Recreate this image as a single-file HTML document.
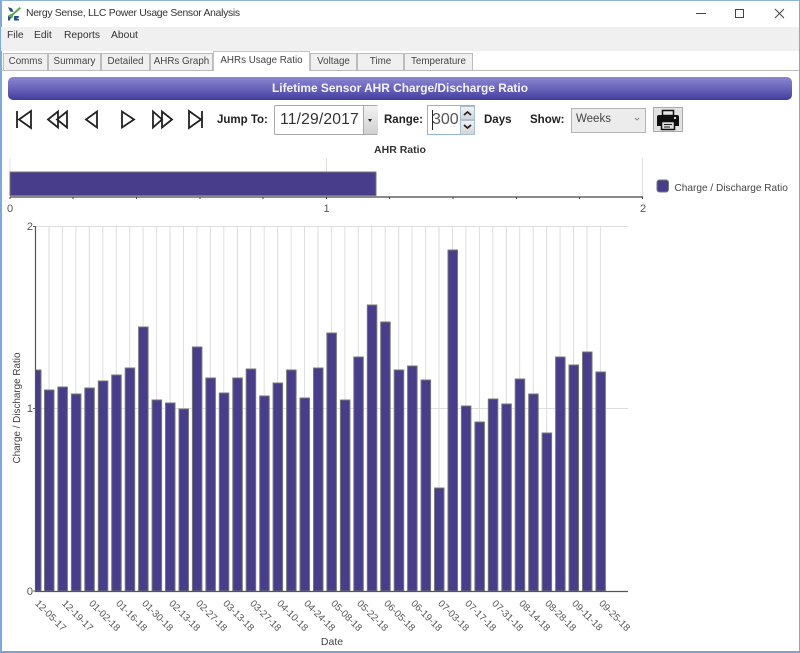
<!DOCTYPE html>
<html><head><meta charset="utf-8">
<style>
html,body{margin:0;padding:0;background:#fff}
#w{position:relative;width:800px;height:653px;overflow:hidden;background:#fff;font-family:"Liberation Sans",sans-serif;color:#333;filter:blur(.3px)}
.a{position:absolute;white-space:nowrap}
.tab{position:absolute;top:53px;height:17px;box-sizing:border-box;background:#f0f0f0;border:1px solid #bcbcbc;border-bottom:none;font-size:9.8px;line-height:16px;text-align:center;color:#444}
.b{font-weight:bold;font-size:11.5px;color:#222}
.m{font-size:10.3px;line-height:14px;color:#333;top:29px}
</style></head><body>
<div id="w">
<div class="a" style="left:0;top:0;width:800px;height:1px;background:#8fb4d6"></div>
<div class="a" style="left:0;top:0;width:1.5px;height:653px;background:#7fa8dc"></div>
<div class="a" style="right:0;top:0;width:1.5px;height:653px;background:#7fa8dc"></div>
<div class="a" style="left:0;top:651px;width:800px;height:2px;background:#7fa3cc"></div>

<svg class="a" style="left:7px;top:7px" width="14" height="14" viewBox="0 0 14 14"><path d="M12.500 0L14 1.500 6.500 8 5 12 3 9.500 1 8.500 6 6z" fill="#5aa848"/><path d="M1 0l4 1.500L6.500 5 3 4.500zM1 9l3 1-1 3.500H1zM7 9h5l-.5 2H9l3 1v1.500H7z" fill="#2a4f7c"/></svg>
<div class="a" style="left:26px;top:7px;font-size:10px;line-height:14px;letter-spacing:-.13px;color:#333;font-size:10.4px;letter-spacing:-.3px">Nergy Sense, LLC Power Usage Sensor Analysis</div>
<svg class="a" style="left:690px;top:5px" width="100" height="18" fill="none" stroke="#444" stroke-width="1"><path d="M6 8.500h10"/><rect x="45.500" y="4.500" width="8" height="8"/><path d="M85 4l9 9M94 4l-9 9"/></svg>

<div class="a" style="left:1px;top:27px;width:798px;height:24px;background:#f0f0f0"></div>
<div class="a m" style="left:7px">File</div>
<div class="a m" style="left:34px">Edit</div>
<div class="a m" style="left:64px">Reports</div>
<div class="a m" style="left:111px">About</div>

<div class="a" style="left:1px;top:70px;width:798px;height:1px;background:#bcbcbc"></div>
<div class="tab" style="left:3px;width:45px">Comms</div>
<div class="tab" style="left:48px;width:53px">Summary</div>
<div class="tab" style="left:101px;width:49px">Detailed</div>
<div class="tab" style="left:150px;width:63px">AHRs Graph</div>
<div class="tab" style="left:213px;top:51px;width:97px;height:20px;background:#fff;line-height:18px;border-color:#c4c4c4">AHRs Usage Ratio</div>
<div class="tab" style="left:310px;width:47px">Voltage</div>
<div class="tab" style="left:357px;width:47px">Time</div>
<div class="tab" style="left:404px;width:69px">Temperature</div>

<div class="a" style="left:8px;top:77px;width:784px;height:23px;border-radius:5px;background:linear-gradient(#8b86cf,#6d68bd 45%,#423d9e);color:#f4f4ff;font-weight:bold;font-size:11.9px;line-height:23px;text-align:center">Lifetime Sensor AHR Charge/Discharge Ratio</div>

<svg class="a" style="left:14px;top:108px" width="196" height="24" fill="#fff" stroke="#222" stroke-width="1.800" stroke-linejoin="miter">
<path d="M3 3v17M17 3v17L5 11.500z"/>
<path d="M44 3.500v16L34 11.500zM53 3.500v16L43 11.500z"/>
<path d="M83 3.500v16L72 11.500z"/>
<path d="M108 3.500v16l12-8z"/>
<path d="M139 3.500v16l9-8zM148 3.500v16l10-8z"/>
<path d="M175 3v17l12-8.500zM188 3v17"/>
</svg>

<div class="a b" style="left:217px;top:113px;line-height:14px">Jump To:</div>
<div class="a" style="left:274px;top:105px;width:104px;height:30px;box-sizing:border-box;border:1px solid #a8a8a8;border-radius:2px;background:#fff"></div>
<div class="a" style="left:280px;top:111px;font-size:15.700px;line-height:18px;color:#333;letter-spacing:.15px">11/29/2017</div>
<div class="a" style="left:363px;top:106px;width:14px;height:28px;background:linear-gradient(#f2f2f2,#d0d0d0);border-left:1px solid #aaa"></div>
<div class="a" style="left:368px;top:119px;width:0;height:0;border-left:2.500px solid transparent;border-right:2.500px solid transparent;border-top:3px solid #222"></div>

<div class="a b" style="left:384px;top:113px;line-height:14px">Range:</div>
<div class="a" style="left:427px;top:105px;width:48px;height:30px;box-sizing:border-box;border:1px solid #8fb4d6;background:#fff"></div>
<div class="a" style="left:432px;top:111px;font-size:16px;line-height:18px;color:#555">300</div>
<div class="a" style="left:432px;top:110px;width:1px;height:20px;background:#222"></div>
<div class="a" style="left:460px;top:106px;width:15px;height:14px;background:linear-gradient(#f2f2f2,#d4d4d4);border:1px solid #a8c0d4;box-sizing:border-box"></div>
<div class="a" style="left:460px;top:120px;width:15px;height:15px;background:linear-gradient(#f2f2f2,#d4d4d4);border:1px solid #a8c0d4;box-sizing:border-box"></div>
<svg class="a" style="left:460px;top:106px" width="15" height="29" fill="none" stroke="#222" stroke-width="1.800"><path d="M4 9l3.500-3 3.500 3M4 19l3.500 3 3.500-3"/></svg>

<div class="a b" style="left:484px;top:113px;line-height:14px">Days</div>
<div class="a b" style="left:530px;top:113px;line-height:14px">Show:</div>
<div class="a" style="left:571px;top:108px;width:75px;height:25px;box-sizing:border-box;border:1px solid #b4b4b4;background:#ececec"></div>
<div class="a" style="left:576px;top:112px;font-size:11.500px;line-height:15px;color:#444">Weeks</div>
<svg class="a" style="left:632px;top:116px" width="10" height="7" fill="none" stroke="#888"><path d="M3 2l2 2 2-2"/></svg>

<div class="a" style="left:653px;top:107px;width:30px;height:25px;box-sizing:border-box;border:1px solid #aaa;background:#e2e2e2"></div>
<svg class="a" style="left:656px;top:108px" width="24" height="24">
<path d="M6.500 2.500h11v5h-11z" fill="#e8e8e8" stroke="#111" stroke-width="1.500"/>
<path d="M3 7h18a2 2 0 0 1 2 2v9h-4v-3H5v3H1V9a2 2 0 0 1 2-2z" fill="#111"/>
<path d="M5.500 13.500h13v8h-13z" fill="#dcdcdc" stroke="#111" stroke-width="1.500"/>
<path d="M8 16.500h8M8 19h6" stroke="#222"/>
<rect x="18" y="9" width="2" height="2" fill="#ddd"/>
</svg>

<svg class="a" style="left:0;top:140px" width="800" height="513" font-family="Liberation Sans,sans-serif">
<text x="400" y="13" font-size="10.500" font-weight="bold" fill="#333" text-anchor="middle">AHR Ratio</text>
<path d="M10 18v39M326.500 18v39M642.500 18v39" stroke="#e0e0e0" fill="none"/>
<rect x="10" y="32" width="366" height="23.500" fill="#483d8b" stroke="#777" stroke-width="1"/>
<path d="M10 57h633" stroke="#444" stroke-width="1.200"/>
<path d="M10 57v2M73 57v2M136.500 57v2M200 57v2M263 57v2M326.500 57v2M389.500 57v2M453 57v2M516.500 57v2M579.500 57v2M642.500 57v2" stroke="#444"/>
<g font-size="11" fill="#555" text-anchor="middle"><text x="10" y="72">0</text><text x="326.500" y="72">1</text><text x="643" y="72">2</text></g>
<rect x="657" y="40" width="11.500" height="12" rx="2.500" fill="#483d8b" stroke="#777"/>
<text x="674.500" y="51" font-size="10.100" fill="#444">Charge / Discharge Ratio</text>

<g transform="translate(0,-140)">
<path d="M49 226V591M62.400 226V591M75.900 226V591M89.300 226V591M102.800 226V591M116.200 226V591M129.700 226V591M143.100 226V591M156.600 226V591M170 226V591M183.500 226V591M196.900 226V591M210.400 226V591M223.800 226V591M237.300 226V591M250.700 226V591M264.200 226V591M277.600 226V591M291.100 226V591M304.500 226V591M318 226V591M331.400 226V591M344.900 226V591M358.300 226V591M371.800 226V591M385.200 226V591M398.700 226V591M412.100 226V591M425.600 226V591M439 226V591M452.500 226V591M465.900 226V591M479.400 226V591M492.800 226V591M506.300 226V591M519.700 226V591M533.200 226V591M546.600 226V591M560.100 226V591M573.500 226V591M587 226V591M600.400 226V591" stroke="#dedede" fill="none"/>
<path d="M36 226.500H628M36 408.500H628" stroke="#dedede" fill="none"/>
<g fill="#483d8b" stroke="#777" stroke-width="1">
<rect x="35.500" y="370" width="5.500" height="221"/>
<rect x="44.500" y="390" width="9.500" height="201"/>
<rect x="57.900" y="387" width="9.500" height="204"/>
<rect x="71.400" y="394" width="9.500" height="197"/>
<rect x="84.800" y="388" width="9.500" height="203"/>
<rect x="98.300" y="381" width="9.500" height="210"/>
<rect x="111.700" y="375" width="9.500" height="216"/>
<rect x="125.200" y="368" width="9.500" height="223"/>
<rect x="138.600" y="327" width="9.500" height="264"/>
<rect x="152.100" y="400" width="9.500" height="191"/>
<rect x="165.500" y="403" width="9.500" height="188"/>
<rect x="179" y="409" width="9.500" height="182"/>
<rect x="192.400" y="347" width="9.500" height="244"/>
<rect x="205.900" y="378" width="9.500" height="213"/>
<rect x="219.300" y="393" width="9.500" height="198"/>
<rect x="232.800" y="378" width="9.500" height="213"/>
<rect x="246.200" y="369" width="9.500" height="222"/>
<rect x="259.700" y="396" width="9.500" height="195"/>
<rect x="273.100" y="383" width="9.500" height="208"/>
<rect x="286.600" y="370" width="9.500" height="221"/>
<rect x="300" y="398" width="9.500" height="193"/>
<rect x="313.500" y="368" width="9.500" height="223"/>
<rect x="326.900" y="333" width="9.500" height="258"/>
<rect x="340.400" y="400" width="9.500" height="191"/>
<rect x="353.800" y="357" width="9.500" height="234"/>
<rect x="367.300" y="305" width="9.500" height="286"/>
<rect x="380.700" y="322" width="9.500" height="269"/>
<rect x="394.200" y="370" width="9.500" height="221"/>
<rect x="407.600" y="366" width="9.500" height="225"/>
<rect x="421.100" y="380" width="9.500" height="211"/>
<rect x="434.500" y="488" width="9.500" height="103"/>
<rect x="448" y="250" width="9.500" height="341"/>
<rect x="461.400" y="406" width="9.500" height="185"/>
<rect x="474.900" y="422" width="9.500" height="169"/>
<rect x="488.300" y="399" width="9.500" height="192"/>
<rect x="501.800" y="404" width="9.500" height="187"/>
<rect x="515.200" y="379" width="9.500" height="212"/>
<rect x="528.700" y="394" width="9.500" height="197"/>
<rect x="542.100" y="433" width="9.500" height="158"/>
<rect x="555.600" y="357" width="9.500" height="234"/>
<rect x="569" y="365" width="9.500" height="226"/>
<rect x="582.500" y="352" width="9.500" height="239"/>
<rect x="595.900" y="372" width="9.500" height="219"/>
</g>
<path d="M35.500 226V591.500H628" stroke="#555" stroke-width="1.200" fill="none"/>
<path d="M33 226.500h3M33 408.500h3M33 591h3" stroke="#666" fill="none"/>
<g font-size="11" fill="#555" text-anchor="end"><text x="33" y="230">2</text><text x="33" y="412">1</text><text x="33" y="595">0</text></g>
<text transform="translate(20,408) rotate(-90)" font-size="9.900" fill="#444" text-anchor="middle">Charge / Discharge Ratio</text>
<text x="332" y="645" font-size="10.500" fill="#444" text-anchor="middle">Date</text>
<g font-size="9.800" fill="#555">
<text transform="translate(34.500,604) rotate(45)">12-05-17</text>
<text transform="translate(61.500,604) rotate(45)">12-19-17</text>
<text transform="translate(88.500,604) rotate(45)">01-02-18</text>
<text transform="translate(115.500,604) rotate(45)">01-16-18</text>
<text transform="translate(141.500,604) rotate(45)">01-30-18</text>
<text transform="translate(168.500,604) rotate(45)">02-13-18</text>
<text transform="translate(195.500,604) rotate(45)">02-27-18</text>
<text transform="translate(222.500,604) rotate(45)">03-13-18</text>
<text transform="translate(249.500,604) rotate(45)">03-27-18</text>
<text transform="translate(276.500,604) rotate(45)">04-10-18</text>
<text transform="translate(303.500,604) rotate(45)">04-24-18</text>
<text transform="translate(330.500,604) rotate(45)">05-08-18</text>
<text transform="translate(356.500,604) rotate(45)">05-22-18</text>
<text transform="translate(383.500,604) rotate(45)">06-05-18</text>
<text transform="translate(410.500,604) rotate(45)">06-19-18</text>
<text transform="translate(437.500,604) rotate(45)">07-03-18</text>
<text transform="translate(464.500,604) rotate(45)">07-17-18</text>
<text transform="translate(491.500,604) rotate(45)">07-31-18</text>
<text transform="translate(518.500,604) rotate(45)">08-14-18</text>
<text transform="translate(544.500,604) rotate(45)">08-28-18</text>
<text transform="translate(571.500,604) rotate(45)">09-11-18</text>
<text transform="translate(598.500,604) rotate(45)">09-25-18</text>
</g>
</g>
</svg>
</div>
</body></html>
